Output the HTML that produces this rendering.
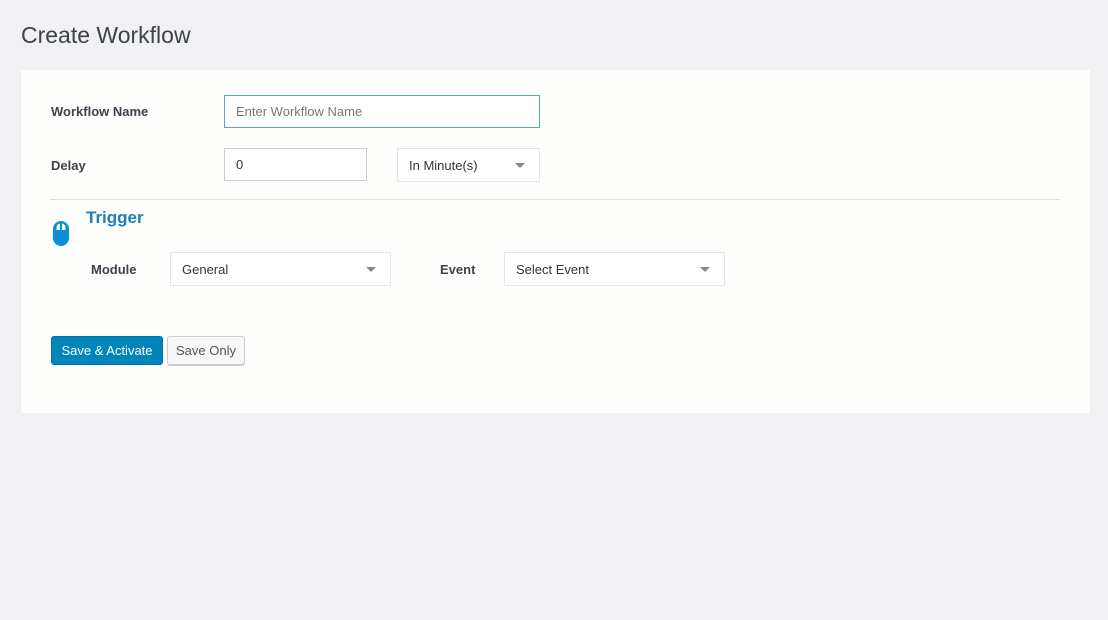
<!DOCTYPE html>
<html><head><style>
body{margin:0;background:#f1f1f3;font-family:"Liberation Sans",sans-serif;width:1108px;height:620px;position:relative;overflow:hidden;color:#444}
.a{position:absolute}
h1{position:absolute;left:21px;top:22px;margin:0;font-size:23px;font-weight:400;color:#3c434a}
.card{left:21px;top:70px;width:1069px;height:343px;background:#fefefd}
.lbl{font-size:13px;font-weight:bold;color:#3c434a}
.box{box-sizing:border-box;border:1px solid #ddd;background:#fff;font-size:13px;color:#32373c;padding-left:11px;display:flex;align-items:center}
.sel{border-color:#e5e5e5}
.car{position:absolute;right:14px;top:14px;width:0;height:0;border-left:5px solid transparent;border-right:5px solid transparent;border-top:5px solid #888}
</style></head><body>
<h1>Create Workflow</h1>
<div class="a card"></div>
<div class="a lbl" style="left:51px;top:104px">Workflow Name</div>
<div class="a box" style="left:224px;top:95px;width:316px;height:33px;border-color:#5b9dd9;color:#777">Enter Workflow Name</div>
<div class="a lbl" style="left:51px;top:158px">Delay</div>
<div class="a box" style="left:224px;top:148px;width:143px;height:33px;border-color:#ccc">0</div>
<div class="a box sel" style="left:397px;top:148px;width:143px;height:34px">In Minute(s)<span class="car"></span></div>
<div class="a" style="left:50px;top:199px;width:1010px;height:1px;background:#ddd"></div>
<div class="a" style="left:86px;top:208px;font-size:17px;font-weight:bold;color:#1e7fb8">Trigger</div>
<svg class="a" style="left:52px;top:220px" width="19" height="27" viewBox="0 0 19 27"><rect x="1" y="1" width="16" height="25" rx="8" fill="#0a8fd6"/><path d="M4.5 10V7.5a4 4 0 0 1 3.5-4V10zM10 10V3.5a4 4 0 0 1 3.5 4V10z" fill="#fff"/></svg>
<div class="a lbl" style="left:91px;top:262px">Module</div>
<div class="a box sel" style="left:170px;top:252px;width:221px;height:34px">General<span class="car"></span></div>
<div class="a lbl" style="left:440px;top:262px">Event</div>
<div class="a box sel" style="left:504px;top:252px;width:221px;height:34px">Select Event<span class="car"></span></div>
<div class="a" style="left:51px;top:336px;width:112px;height:29px;box-sizing:border-box;background:#0085ba;border:1px solid #0073aa;border-radius:3px;color:#fff;font-size:13px;display:flex;align-items:center;justify-content:center">Save &amp; Activate</div>
<div class="a" style="left:167px;top:336px;width:78px;height:29px;box-sizing:border-box;background:#f7f7f7;border:1px solid #ccc;border-radius:3px;color:#555;font-size:13px;display:flex;align-items:center;justify-content:center;box-shadow:0 1px 0 #ccc">Save Only</div>
</body></html>
